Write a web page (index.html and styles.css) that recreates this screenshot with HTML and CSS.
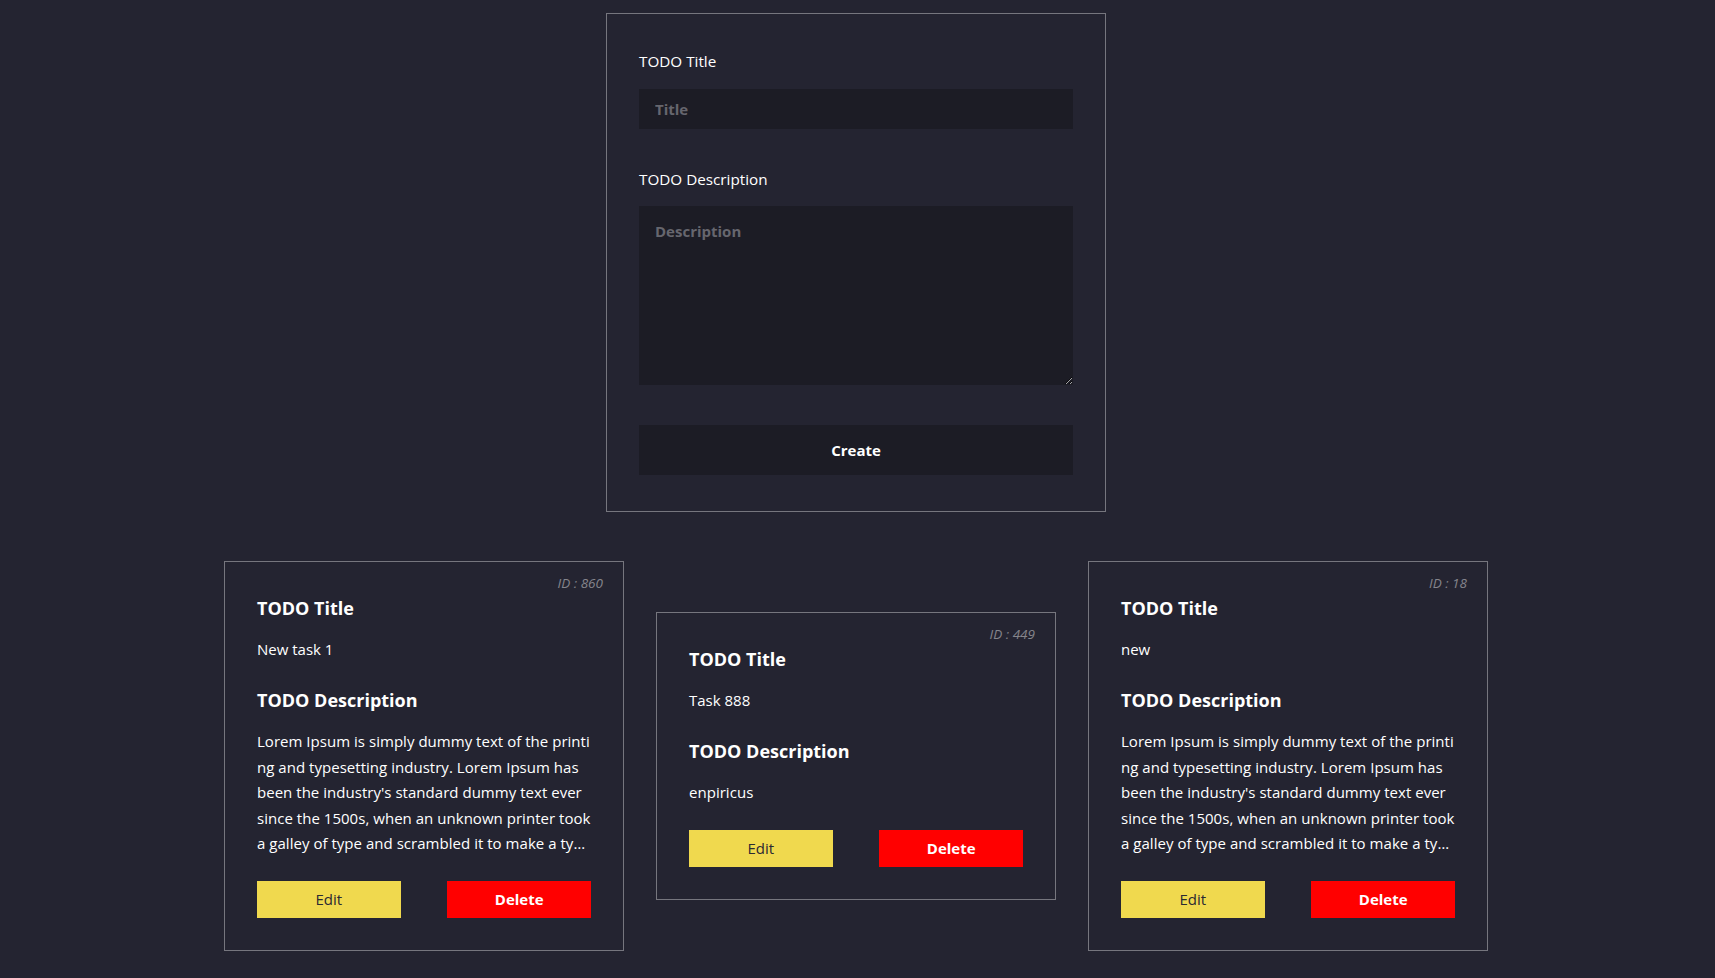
FILE: index.html
```html
<!DOCTYPE html>
<html lang="en">
<head>
<meta charset="utf-8">
<title>TODO</title>
<link rel="stylesheet" href="styles.css">
</head>
<body>
<main class="page">
  <form class="create-form">
    <label class="field-label" for="title">TODO Title</label>
    <input class="field-input" id="title" type="text" placeholder="Title">
    <label class="field-label field-label--gap" for="desc">TODO Description</label>
    <textarea class="field-textarea" id="desc" placeholder="Description"></textarea>
    <button class="create-btn" type="button">Create</button>
  </form>

  <section class="cards">
    <article class="card">
      <span class="card-id">ID : 860</span>
      <h3 class="card-heading">TODO Title</h3>
      <p class="card-value">New task 1</p>
      <h3 class="card-heading card-heading--gap">TODO Description</h3>
      <p class="card-value card-desc">Lorem Ipsum is simply dummy text of the printing and typesetting industry. Lorem Ipsum has been the industry's standard dummy text ever since the 1500s, when an unknown printer took a galley of type and scrambled it to make a type specimen book.</p>
      <div class="card-actions">
        <button class="btn btn-edit" type="button">Edit</button>
        <button class="btn btn-delete" type="button">Delete</button>
      </div>
    </article>

    <article class="card">
      <span class="card-id">ID : 449</span>
      <h3 class="card-heading">TODO Title</h3>
      <p class="card-value">Task 888</p>
      <h3 class="card-heading card-heading--gap">TODO Description</h3>
      <p class="card-value card-desc">enpiricus</p>
      <div class="card-actions">
        <button class="btn btn-edit" type="button">Edit</button>
        <button class="btn btn-delete" type="button">Delete</button>
      </div>
    </article>

    <article class="card">
      <span class="card-id">ID : 18</span>
      <h3 class="card-heading">TODO Title</h3>
      <p class="card-value">new</p>
      <h3 class="card-heading card-heading--gap">TODO Description</h3>
      <p class="card-value card-desc">Lorem Ipsum is simply dummy text of the printing and typesetting industry. Lorem Ipsum has been the industry's standard dummy text ever since the 1500s, when an unknown printer took a galley of type and scrambled it to make a type specimen book.</p>
      <div class="card-actions">
        <button class="btn btn-edit" type="button">Edit</button>
        <button class="btn btn-delete" type="button">Delete</button>
      </div>
    </article>
  </section>
</main>
</body>
</html>
```

FILE: styles.css
```css
* { box-sizing: border-box; }

html, body {
  margin: 0;
  background: #242431;
}

body {
  font-family: "Open Sans", "Noto Sans", sans-serif;
  font-size: 15px;
  color: #ffffff;
}

.page {
  display: flex;
  flex-direction: column;
  align-items: center;
  padding: 13px 3px 20px 0;
}

.create-form {
  width: 500px;
  display: flex;
  flex-direction: column;
  padding: 37px 32px 36px;
  border: 1px solid #76767e;
}

.field-label {
  display: block;
  font-size: 15.25px;
  line-height: 21px;
  color: #ffffff;
}

.field-label--gap { margin-top: 40px; }

.field-input,
.field-textarea {
  display: block;
  width: 100%;
  background: #1c1c25;
  border: none;
  outline: none;
  color: #ffffff;
  font-family: inherit;
  font-size: 15px;
  font-weight: 700;
  padding: 0 16px;
}

.field-input {
  margin-top: 17px;
  height: 40px;
}

.field-textarea {
  margin-top: 16px;
  height: 179px;
  padding-top: 15px;
  resize: vertical;
}

.field-input::placeholder,
.field-textarea::placeholder {
  color: #66666e;
  font-weight: 700;
}

.create-btn {
  margin-top: 40px;
  height: 50px;
  background: #1c1c25;
  border: none;
  color: #ffffff;
  font-family: inherit;
  font-size: 15px;
  font-weight: 700;
}

.cards {
  margin-top: 49px;
  display: flex;
  align-items: center;
  gap: 32px;
}

.card {
  position: relative;
  width: 400px;
  padding: 33px 32px 32px;
  border: 1px solid #76767e;
}

.card-id {
  position: absolute;
  top: 12px;
  right: 20px;
  font-size: 13.5px;
  font-style: italic;
  color: #85858c;
}

.card-heading {
  margin: 0;
  font-size: 18px;
  line-height: 27px;
  font-weight: 700;
}

.card-heading--gap { margin-top: 27px; }

.card-value {
  margin: 17px 0 0;
  font-size: 15px;
  line-height: 21px;
}

.card-desc {
  margin-top: 15px;
  line-height: 25.6px;
  letter-spacing: 0.03px;
  word-break: break-all;
  display: -webkit-box;
  -webkit-box-orient: vertical;
  -webkit-line-clamp: 5;
  overflow: hidden;
}

.card-actions {
  margin-top: 24px;
  display: flex;
  justify-content: space-between;
}

.btn {
  width: 43%;
  height: 37px;
  border: none;
  font-family: inherit;
  font-size: 15px;
}

.btn-edit {
  background: #f0d94e;
  color: #2a2a33;
}

.btn-delete {
  background: #ff0000;
  color: #ffffff;
  font-weight: 700;
}
```
